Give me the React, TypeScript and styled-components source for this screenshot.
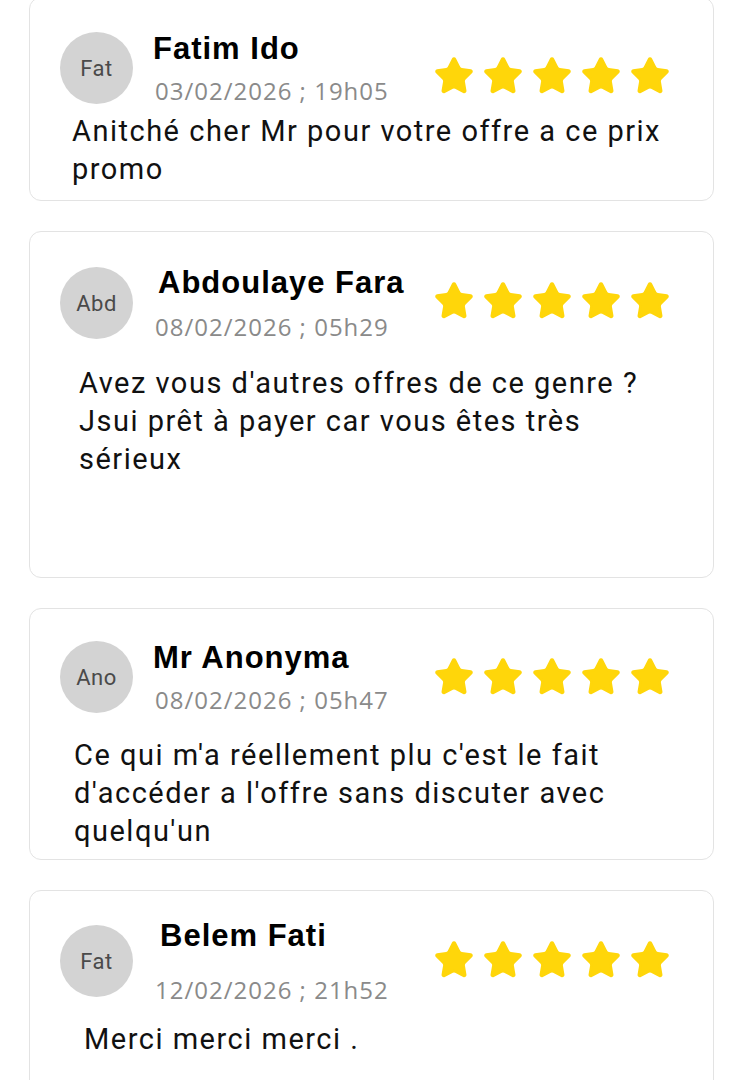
import React from 'react';
import styled, {createGlobalStyle} from 'styled-components';
import {Star} from 'lucide-react';

const GlobalStyle = createGlobalStyle`
  body {
    margin: 0;
    background: #fff;
    font-family: Roboto, "Liberation Sans", sans-serif;
  }
`

type Review = {
  initials: string;
  name: string;
  date: string;
  text: string;
  nameShift: number;
  nameGap: number;
  starsDrop: number;
  indent: number;
  bodyGap: number;
  padTop: number;
  padBottom: number;
};

const reviews: Review[] = [
  {
    initials: 'Fat',
    name: 'Fatim Ido',
    date: '03/02/2026 ; 19h05',
    text: 'Anitché cher Mr pour votre offre a ce prix promo',
    nameShift: 0,
    nameGap: 10,
    starsDrop: 8,
    indent: 12,
    bodyGap: 8,
    padTop: 34,
    padBottom: 12,
  },
  {
    initials: 'Abd',
    name: 'Abdoulaye Fara',
    date: '08/02/2026 ; 05h29',
    text: "Avez vous d'autres offres de ce genre ? Jsui prêt à payer car vous êtes très sérieux",
    nameShift: 5,
    nameGap: 12,
    starsDrop: -2,
    indent: 19,
    bodyGap: 25,
    padTop: 35,
    padBottom: 99,
  },
  {
    initials: 'Ano',
    name: 'Mr Anonyma',
    date: '08/02/2026 ; 05h47',
    text: "Ce qui m'a réellement plu c'est le fait d'accéder a l'offre sans discuter avec quelqu'un",
    nameShift: 0,
    nameGap: 10,
    starsDrop: 0,
    indent: 14,
    bodyGap: 23,
    padTop: 32,
    padBottom: 9,
  },
  {
    initials: 'Fat',
    name: 'Belem Fati',
    date: '12/02/2026 ; 21h52',
    text: 'Merci merci merci .',
    nameShift: 7,
    nameGap: 22,
    starsDrop: -1,
    indent: 24,
    bodyGap: 23,
    padTop: 34,
    padBottom: 80,
  },
];

const ReviewCard: React.FC<{review: Review}> = ({review}) => {
  return (
    <Card $top={review.padTop} $bottom={review.padBottom}>
      <Header>
        <Avatar>{review.initials}</Avatar>
        <Who $gap={review.nameGap}>
          <Name $shift={review.nameShift}>{review.name}</Name>
          <DateText>{review.date}</DateText>
        </Who>
        <Stars $drop={review.starsDrop}>
          {[0, 1, 2, 3, 4].map((i) => (
            <Star key={i} size={42} fill="#FFD60A" color="#FFD60A" strokeWidth={1.5} />
          ))}
        </Stars>
      </Header>
      <Body $indent={review.indent} $gap={review.bodyGap}>{review.text}</Body>
    </Card>
  )
}

const App: React.FC = () => {
  return (
    <>
      <GlobalStyle />
      <List>
        {reviews.map((r, i) => <ReviewCard key={i} review={r} />)}
      </List>
    </>
  )
}

const List = styled.div`
  display: flex;
  flex-direction: column;
  gap: 30px;
  padding: 0 29px;
  margin-top: -3px;
  height: 1083px;
  overflow: hidden;
`

const Card = styled.div<{$top: number; $bottom: number}>`
  border: 1.5px solid #e3e3e3;
  border-radius: 12px;
  padding: ${(p) => p.$top}px 20px ${(p) => p.$bottom}px 30px;
  flex-shrink: 0;
`

const Header = styled.div`
  display: flex;
  align-items: center;
  height: 72px;
`

const Avatar = styled.div`
  width: 73px;
  height: 72px;
  border-radius: 50%;
  background: #d3d3d3;
  color: #4a4a4a;
  font-size: 22px;
  letter-spacing: 0.5px;
  display: flex;
  align-items: center;
  justify-content: center;
  flex-shrink: 0;
`

const Who = styled.div<{$gap: number}>`
  display: flex;
  flex-direction: column;
  margin-left: 20px;
  gap: ${(p) => p.$gap}px;
  flex: 1;
`

const Name = styled.div<{$shift: number}>`
  font-family: "Liberation Sans", Arial, sans-serif;
  font-size: 31px;
  font-weight: 700;
  letter-spacing: 1px;
  color: #000;
  line-height: 36px;
  margin-left: ${(p) => p.$shift}px;
`

const DateText = styled.div`
  font-family: "Open Sans", sans-serif;
  font-size: 24px;
  letter-spacing: 1px;
  color: #8a8a8a;
  line-height: 28px;
  margin-left: 2px;
`

const Stars = styled.div<{$drop: number}>`
  display: flex;
  gap: 7px;
  margin-right: 22px;
  margin-top: ${(p) => p.$drop * 2}px;
`

const Body = styled.p<{$indent: number; $gap: number}>`
  margin: ${(p) => p.$gap}px 0 0 ${(p) => p.$indent}px;
  font-size: 29px;
  letter-spacing: 1.5px;
  line-height: 38px;
  color: #111;
`

export default App;
